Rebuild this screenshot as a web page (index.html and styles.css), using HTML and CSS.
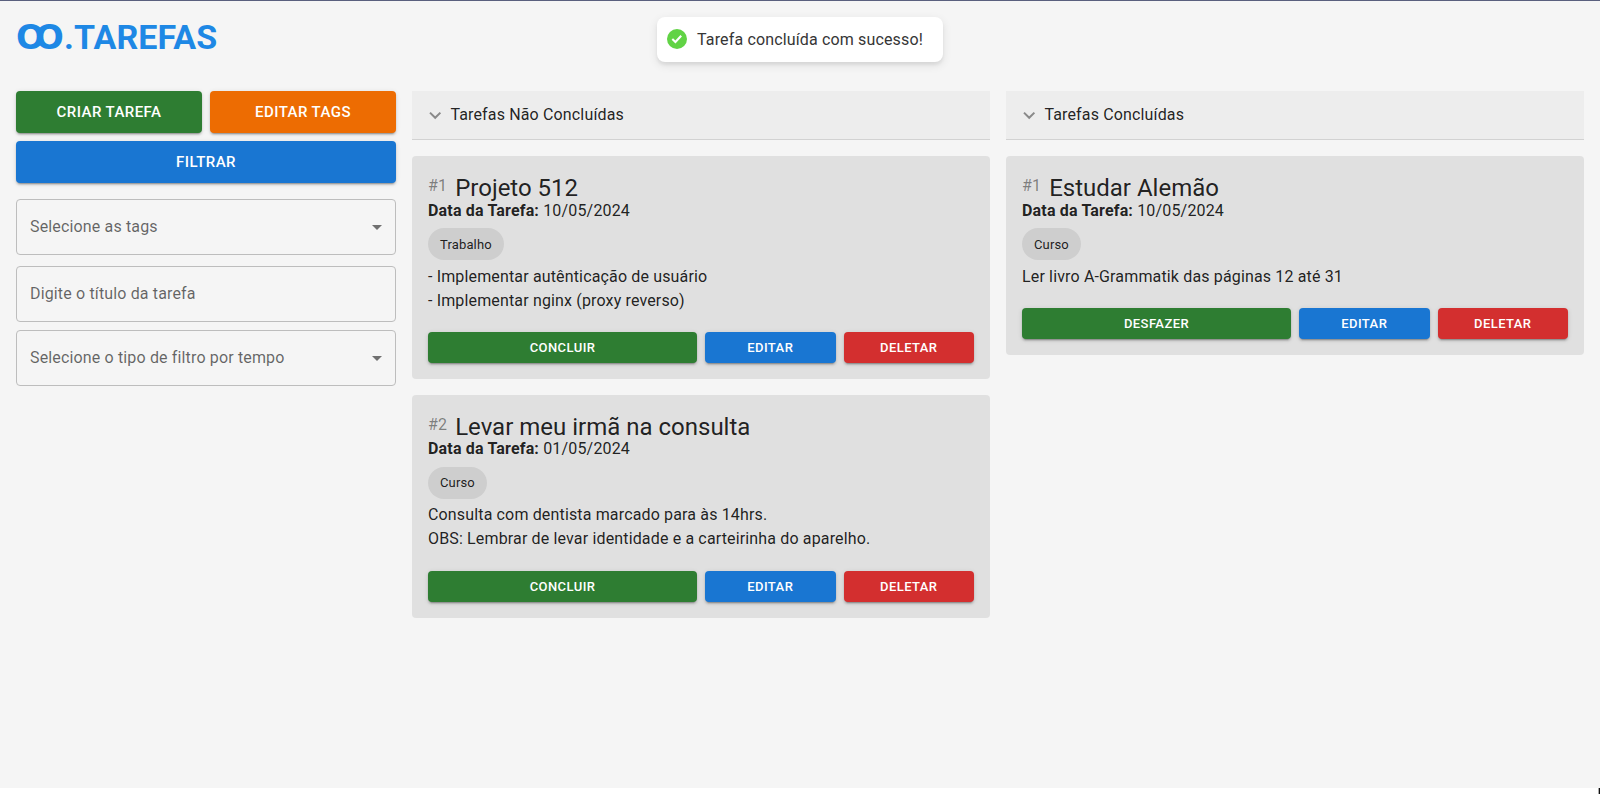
FILE: index.html
```html
<!DOCTYPE html>
<html lang="pt-BR">
<head>
<meta charset="utf-8">
<title>Tarefas</title>
<link rel="stylesheet" href="styles.css">
</head>
<body>
<div class="app">
  <header class="header"><h1 class="logo"><span class="logo-mark">Ꝏ</span>.TAREFAS</h1></header>
  <main class="board">
    <aside class="sidebar">
      <div class="actions">
        <button class="btn btn-large green half">Criar Tarefa</button>
        <button class="btn btn-large orange half">Editar Tags</button>
        <button class="btn btn-large blue full">Filtrar</button>
      </div>
      <div class="field field-tags"><span>Selecione as tags</span><svg class="caret" viewBox="0 0 24 24"><path d="M7 10l5 5 5-5z"/></svg></div>
      <div class="field"><span>Digite o título da tarefa</span></div>
      <div class="field"><span>Selecione o tipo de filtro por tempo</span><svg class="caret" viewBox="0 0 24 24"><path d="M7 10l5 5 5-5z"/></svg></div>
    </aside>
    <section class="column">
      <div class="summary"><svg class="chevron" viewBox="0 0 14.4 14.4"><path d="M2 4.6 7.2 9.8 12.4 4.6"/></svg><span>Tarefas Não Concluídas</span></div>
      <article class="card">
        <div class="heading"><span class="number">#1</span><h2 class="title">Projeto 512</h2></div>
        <p class="date"><b>Data da Tarefa:</b> 10/05/2024</p>
        <span class="chip">Trabalho</span>
        <p class="text">- Implementar autênticação de usuário<br>- Implementar nginx (proxy reverso)</p>
        <div class="actions">
          <button class="btn green half">Concluir</button>
          <button class="btn blue quarter">Editar</button>
          <button class="btn red quarter">Deletar</button>
        </div>
      </article>
      <article class="card">
        <div class="heading"><span class="number">#2</span><h2 class="title">Levar meu irmã na consulta</h2></div>
        <p class="date"><b>Data da Tarefa:</b> 01/05/2024</p>
        <span class="chip">Curso</span>
        <p class="text">Consulta com dentista marcado para às 14hrs.<br>OBS: Lembrar de levar identidade e a carteirinha do aparelho.</p>
        <div class="actions">
          <button class="btn green half">Concluir</button>
          <button class="btn blue quarter">Editar</button>
          <button class="btn red quarter">Deletar</button>
        </div>
      </article>
    </section>
    <section class="column">
      <div class="summary"><svg class="chevron" viewBox="0 0 14.4 14.4"><path d="M2 4.6 7.2 9.8 12.4 4.6"/></svg><span>Tarefas Concluídas</span></div>
      <article class="card">
        <div class="heading"><span class="number">#1</span><h2 class="title">Estudar Alemão</h2></div>
        <p class="date"><b>Data da Tarefa:</b> 10/05/2024</p>
        <span class="chip">Curso</span>
        <p class="text">Ler livro A-Grammatik das páginas 12 até 31</p>
        <div class="actions">
          <button class="btn green half">Desfazer</button>
          <button class="btn blue quarter">Editar</button>
          <button class="btn red quarter">Deletar</button>
        </div>
      </article>
    </section>
  </main>
</div>
<footer class="strip"><span class="strip-end"></span></footer>
<div class="toast">
  <svg class="toast-icon" viewBox="0 0 20 20"><circle cx="10" cy="10" r="10" fill="#61d345"/><path d="M5.3 10.1 8.4 13 14.2 6.8" fill="none" stroke="#fff" stroke-width="2.1"/></svg>
  <span class="toast-text">Tarefa concluída com sucesso!</span>
</div>
</body>
</html>
```
FILE: styles.css
```css
* { box-sizing: border-box; }
body {
  margin: 0;
  height: 794px;
  overflow: hidden;
  background: #fff;
  color: rgba(0, 0, 0, .87);
  font: 400 16px/24px Roboto, sans-serif;
  letter-spacing: .15px;
}
h1, h2, p { margin: 0; }
.app { height: 788px; background: #f5f5f5; border-top: 1px solid #5a607e; }
.header { height: 90px; padding: 15px 16px 0; }
.logo { color: #1e88e5; font-size: 34px; line-height: 42px; font-weight: 700; letter-spacing: .15px; }
.logo-mark { font-family: "DejaVu Sans", sans-serif; line-height: 1; }
.board { display: grid; grid-template-columns: 380px 1fr 1fr; gap: 16px; padding: 0 16px; align-items: start; }
.actions { display: grid; grid-template-columns: repeat(12, 1fr); gap: 8px; }
.full { grid-column: span 12; }
.half { grid-column: span 6; }
.quarter { grid-column: span 3; }
.btn {
  border: 0;
  border-radius: 4px;
  padding: 5px 10px 3px;
  color: #fff;
  font: 500 13px/22.75px Roboto, sans-serif;
  letter-spacing: .43px;
  text-transform: uppercase;
  box-shadow: 0 3px 1px -2px rgba(0, 0, 0, .2), 0 2px 2px 0 rgba(0, 0, 0, .14), 0 1px 5px 0 rgba(0, 0, 0, .12);
}
.btn-large { padding: 8px 22px; font-size: 15px; line-height: 26px; }
.green { background: #2e7d32; }
.orange { background: #ed6c02; }
.blue { background: #1976d2; }
.red { background: #d32f2f; }
.field {
  display: flex;
  align-items: center;
  justify-content: space-between;
  height: 56px;
  margin-bottom: 8px;
  padding: 0 6px 0 13px;
  border: 1px solid #bdbdbd;
  border-radius: 4px;
  color: rgba(0, 0, 0, .6);
}
.field-tags { margin: 16px 0 11px; }
.caret { width: 24px; height: 24px; fill: rgba(0, 0, 0, .54); }
.column { display: flex; flex-direction: column; gap: 16px; }
.summary {
  display: flex;
  align-items: center;
  gap: 8px;
  height: 49px;
  padding: 0 16px;
  background: #ededed;
  border-bottom: 1px solid #d2d2d2;
}
.chevron { width: 14.4px; height: 14.4px; fill: none; stroke: rgba(0, 0, 0, .42); stroke-width: 2; }
.card { padding: 16px; border-radius: 4px; background: #e0e0e0; }
.heading { display: flex; gap: 8px; height: 26.5px; }
.number { color: rgba(0, 0, 0, .45); line-height: 28px; }
.title { font-size: 24px; line-height: 32px; font-weight: 400; letter-spacing: 0; }
.date { letter-spacing: .17px; }
.chip {
  display: block;
  width: fit-content;
  height: 32px;
  margin: 5.5px 0 4.5px;
  padding: .5px 12px 0;
  border-radius: 16px;
  background: #cecece;
  font-size: 13px;
  line-height: 32px;
}
.text { margin-bottom: 19.5px; }
.strip { display: flex; justify-content: flex-end; height: 6px; }
.strip-end { width: 2px; background: #111; border-left: 1px solid #aaa; }
.toast {
  position: absolute;
  top: 17px;
  left: 50%;
  transform: translateX(-50%);
  display: flex;
  align-items: center;
  padding: 8px 10px;
  border-radius: 8px;
  background: #fff;
  color: #363636;
  line-height: 1.3;
  white-space: nowrap;
  box-shadow: 0 3px 10px rgba(0, 0, 0, .1), 0 3px 3px rgba(0, 0, 0, .05);
}
.toast-icon { width: 20px; height: 20px; }
.toast-text { margin: 5px 10px 3px; }
```
